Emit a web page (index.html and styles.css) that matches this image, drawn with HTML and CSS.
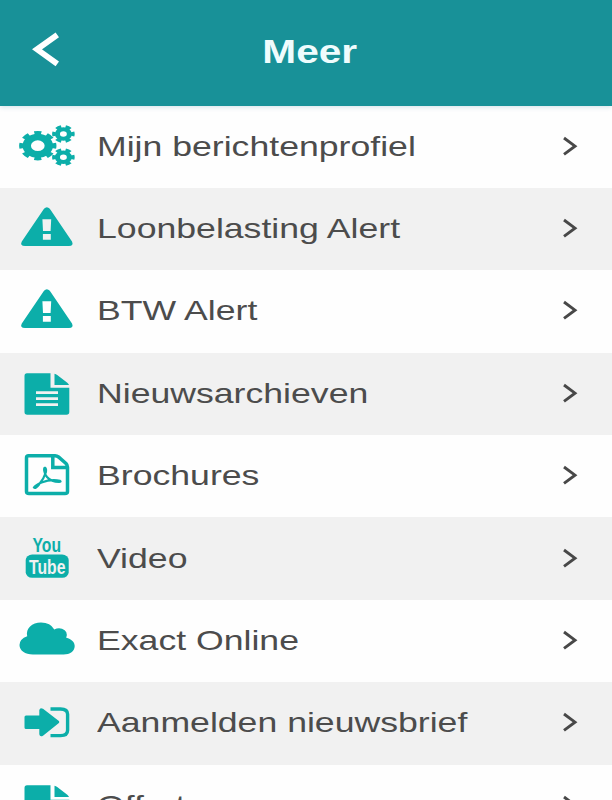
FILE: index.html
```html
<!DOCTYPE html>
<html lang="nl">
<head>
<meta charset="utf-8">
<title>Meer</title>
<link rel="stylesheet" href="styles.css">
</head>
<body>
<svg class="defs" aria-hidden="true">
  <symbol id="chevron" viewBox="0 0 18 24"><path d="M2 4 L13 12.2 L2 20.4" fill="none" stroke="#484848" stroke-width="2.9"/></symbol>
  <symbol id="alert" viewBox="0 0 97 82">
    <path fill-rule="evenodd" d="M44 20.8 Q46.8 17.8 49.8 20.8 L72 53.5 Q74 57.8 69 58 H25 Q19.5 57.8 21.8 53.5 Z M42.4 31.3 L43 43 H50.6 L51.2 31.3 Z M42.9 46 V51.8 H50.8 V46 Z"/>
  </symbol>
  <symbol id="file" viewBox="0 0 97 82">
    <path fill-rule="evenodd" d="M27 20.3 H50.5 V34.8 H69.3 V59 Q69.3 61.8 66.5 61.8 H27.3 Q24.5 61.8 24.5 59 V23 Q24.5 20.3 27 20.3 Z M36 38.3 V41 H58 V38.3 Z M36 44.2 V46.9 H58 V44.2 Z M36 50.2 V52.9 H58 V50.2 Z"/>
    <path d="M54.5 20.8 Q56 21 57.2 22 L67.3 29.7 Q68.7 31 69 32 H54.5 Z"/>
  </symbol>
</svg>
<div class="screen">
  <header class="bar">
    <svg class="back" viewBox="0 0 30 38"><path d="M25.3 3.8 L5 18.3 L25.3 32.8" fill="none" stroke="#fff" stroke-width="5.8"/></svg>
    <h1 class="title">Meer</h1>
  </header>
  <ul class="menu">
    <li class="row">
      <svg class="icon" viewBox="0 0 97 82"><g class="lines">
        <g transform="translate(37.8 39.7) scale(1.27 1)"><circle r="8.7" stroke-width="6.6"/><circle r="12.3" stroke-width="4.8" pathLength="16" stroke-dasharray="1.1 .9" stroke-dashoffset=".55"/></g>
        <g transform="translate(63.4 28) scale(1.27 1)"><circle r="4.7" stroke-width="4"/><circle r="7.2" stroke-width="3.4" pathLength="12" stroke-dasharray="1.1 .9" stroke-dashoffset=".55"/></g>
        <g transform="translate(63.4 51.2) scale(1.27 1)"><circle r="4.7" stroke-width="4"/><circle r="7.2" stroke-width="3.4" pathLength="12" stroke-dasharray="1.1 .9" stroke-dashoffset=".55"/></g>
      </g></svg>
      <span class="label">Mijn berichtenprofiel</span><svg class="next"><use href="#chevron"/></svg>
    </li>
    <li class="row"><svg class="icon"><use href="#alert"/></svg><span class="label">Loonbelasting Alert</span><svg class="next"><use href="#chevron"/></svg></li>
    <li class="row"><svg class="icon"><use href="#alert"/></svg><span class="label">BTW Alert</span><svg class="next"><use href="#chevron"/></svg></li>
    <li class="row"><svg class="icon"><use href="#file"/></svg><span class="label">Nieuwsarchieven</span><svg class="next"><use href="#chevron"/></svg></li>
    <li class="row">
      <svg class="icon" viewBox="0 0 97 82"><g class="lines">
        <path stroke-width="3.5" d="M28.5 20.8 H55 Q57 21 58.5 22 L66 28.5 Q67.5 30 67.5 32 V56.5 Q67.5 58.5 65 58.5 H29 Q26.5 58.5 26.5 56.5 V22.8 Q26.5 20.8 28.5 20.8 Z M52.8 21 V32.5 H67"/>
        <path stroke-width="2.2" stroke-linecap="round" d="M45.4 33 Q43.8 32 44.2 35.5 Q44.8 39.5 47 42 Q51.5 47 59 47 Q61.5 46.8 60 45.8 Q51 44 41.5 47.5 Q35 50.5 34 52.5 Q35.5 54 39 49.5 Q44 43.5 45.8 37.5 Q46.5 34 45.4 33"/>
      </g></svg>
      <span class="label">Brochures</span><svg class="next"><use href="#chevron"/></svg>
    </li>
    <li class="row">
      <svg class="icon" viewBox="0 0 97 82">
        <rect x="25.7" y="36.6" width="43" height="23.2" rx="6.5" ry="5.5"/>
        <text class="you" x="32.5" y="34.4" textLength="28.5" lengthAdjust="spacingAndGlyphs">You</text>
        <text class="tube" x="29" y="55.6" textLength="36.5" lengthAdjust="spacingAndGlyphs">Tube</text>
      </svg>
      <span class="label">Video</span><svg class="next"><use href="#chevron"/></svg>
    </li>
    <li class="row">
      <svg class="icon" viewBox="0 0 97 82"><path d="M33 54.5 C25 54.5 19.5 50.5 19.5 45 Q19.5 39 27.2 36.2 C25.5 28.5 32 22.5 41 22.5 Q50.5 22.5 54.3 29.5 Q58 27.5 62 28.7 Q68.5 31 66.2 37.7 C71.5 39 74.7 42.2 74.7 46 C74.7 51 70 54.5 63.5 54.5 Z"/></svg>
      <span class="label">Exact Online</span><svg class="next"><use href="#chevron"/></svg>
    </li>
    <li class="row">
      <svg class="icon" viewBox="0 0 97 82"><path d="M26 33.5 H39.3 V28.2 Q39.8 25.2 43 26.7 L58.9 38.9 Q59.8 39.9 58.9 40.9 L43 53.7 Q39.8 55.2 39.3 52.2 V47 H26 Q24.5 47 24.5 45.5 V35 Q24.5 33.5 26 33.5 Z"/><path class="lines" stroke-width="3.4" d="M50.5 27 H60.5 Q67.6 27 67.6 32.3 V48.3 Q67.6 53.6 60.5 53.6 H50.5"/></svg>
      <span class="label">Aanmelden nieuwsbrief</span><svg class="next"><use href="#chevron"/></svg>
    </li>
    <li class="row"><svg class="icon"><use href="#file"/></svg><span class="label">Offertes</span><svg class="next"><use href="#chevron"/></svg></li>
  </ul>
</div>
</body>
</html>
```
FILE: styles.css
```css
* { box-sizing: border-box; }
body { margin: 0; font-family: "Liberation Sans", Arial, sans-serif; background: #fefefe; }
.defs { display: block; width: 0; height: 0; }
.screen { height: 800px; overflow: hidden; }
.bar {
  display: grid;
  grid-template-columns: 97px 1fr 97px;
  align-items: center;
  height: 105.5px;
  background: #189198;
  box-shadow: 0 1px 5px rgba(24, 110, 140, .2);
}
.back { width: 30px; height: 38px; margin: -6px 0 0 32px; }
.title {
  margin: -2px 0 0;
  padding-left: 6px;
  text-align: center;
  font-size: 32.5px;
  line-height: 40px;
  color: #effcfd;
  transform: scaleX(1.25);
}
.menu { margin: 0; padding: 0; list-style: none; }
.row {
  display: flex;
  align-items: center;
  height: 82.4px;
}
.row:nth-child(even) { background: #f1f1f1; }
.icon { flex: none; width: 97px; height: 82px; fill: #0caea9; }
.lines { fill: none; stroke: #0caea9; }
.label {
  flex: 1;
  margin-top: -2px;
  font-size: 28.5px;
  line-height: 36px;
  color: #4c4c4c;
  white-space: nowrap;
  transform: scaleX(1.25);
  transform-origin: left;
}
.next { flex: none; width: 18px; height: 24px; margin: -2px 32px 0 0; }
.you, .tube { font-family: "Liberation Sans", Arial, sans-serif; font-weight: bold; }
.you { font-size: 20px; }
.tube { font-size: 20px; fill: #f1f1f1; }
```
